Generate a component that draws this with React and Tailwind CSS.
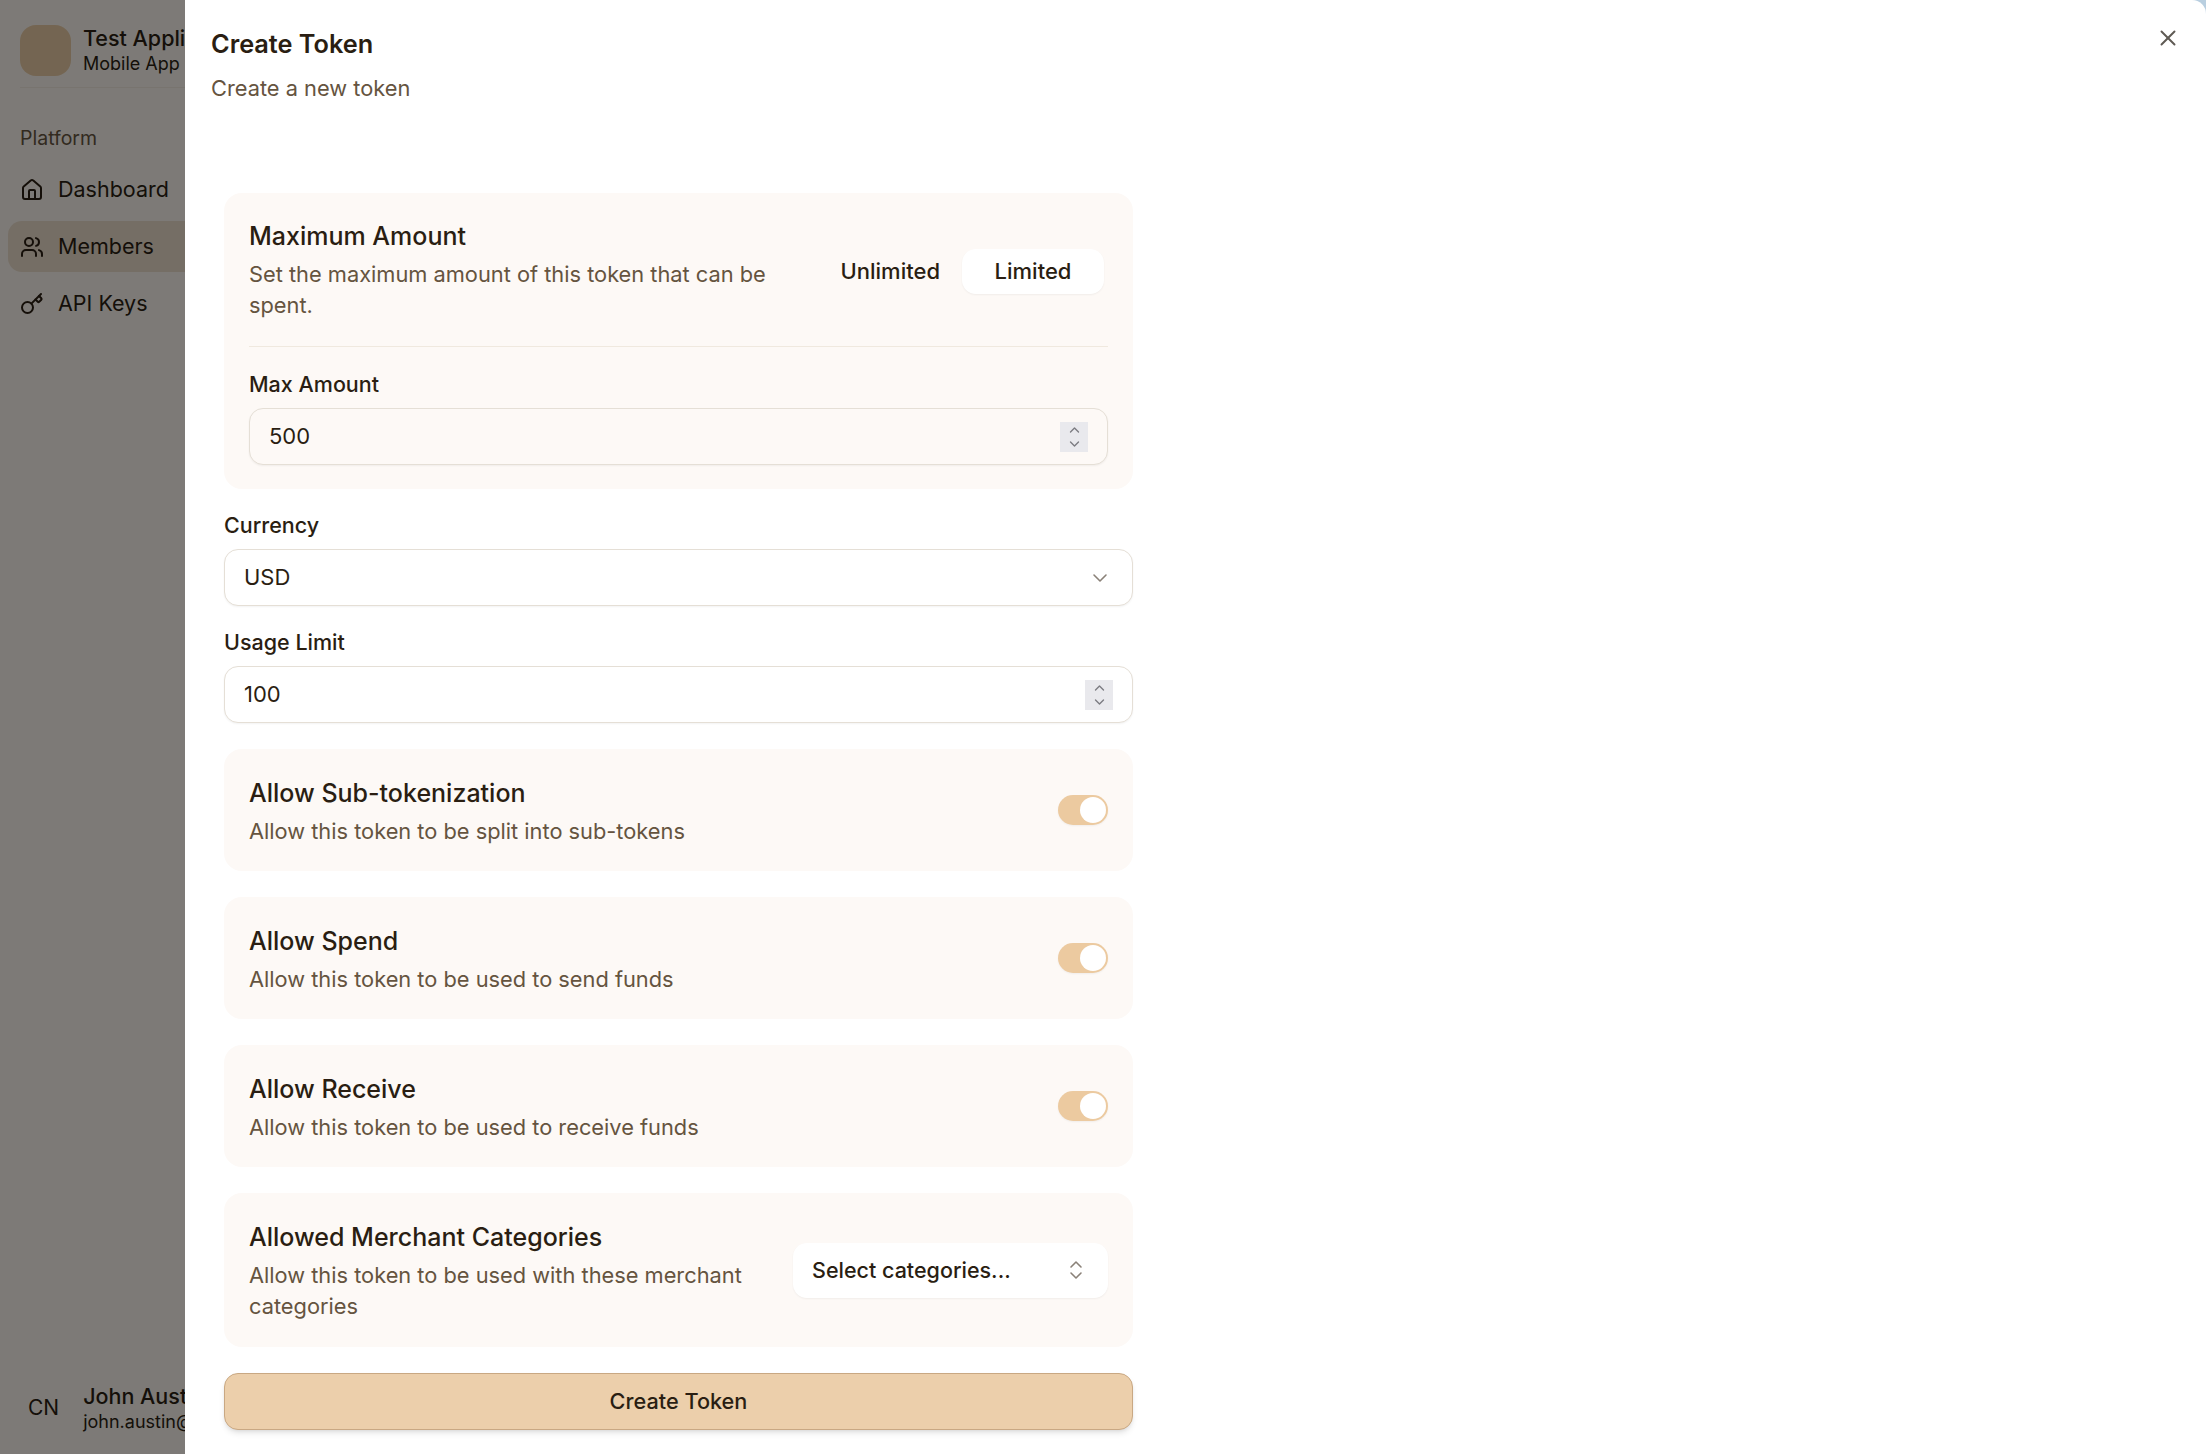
import { ChevronDown, ChevronUp, ChevronsUpDown, House, Key, Users, X } from "lucide-react";

const nav = [
  { label: "Dashboard", icon: House },
  { label: "Members", icon: Users, active: true },
  { label: "API Keys", icon: Key },
];

const Spinner = () => (
  <div className="flex h-[30px] w-[28px] flex-col items-center justify-center bg-[#e9e9ed] text-[#7b7b80]">
    <ChevronUp size={17} strokeWidth={2} className="-mb-[1px]" />
    <ChevronDown size={17} strokeWidth={2} className="-mt-[1px]" />
  </div>
);

const Toggle = () => (
  <div className="flex h-[30px] w-[50px] shrink-0 items-center justify-end rounded-full bg-[#eccaa0] pr-[2px] shadow-xs">
    <div className="h-[26px] w-[26px] rounded-full bg-white" />
  </div>
);

const Field = ({ label, children }) => (
  <div className="flex flex-col gap-[14px]">
    <div className="text-[21.5px] leading-[20px] font-medium text-[#2a1e12]">{label}</div>
    {children}
  </div>
);

const Box = ({ children, bg = "bg-white" }) => (
  <div className={`flex h-[57px] items-center justify-between rounded-[14px] border border-[#e5dfd6] ${bg} pr-[19px] pl-[19px] text-[22px] text-[#2a1e12] shadow-xs`}>
    {children}
  </div>
);

const Heading = ({ title, text, className = "" }) => (
  <div className={`flex min-w-0 flex-col gap-[7px] ${className}`}>
    <div className="text-[25px] leading-[31px] font-medium text-[#2a1e12]">{title}</div>
    <div className="text-[21.8px] leading-[31px] text-[#65543f]">{text}</div>
  </div>
);

const ToggleCard = ({ title, text }) => (
  <div className="flex h-[122px] items-center justify-between rounded-[18px] bg-[#fdf9f6] px-[25px]">
    <Heading title={title} text={text} className="pt-[5px]" />
    <Toggle />
  </div>
);

export default function App() {
  return (
    <div className="relative h-[1454px] w-[2206px] overflow-hidden bg-[#fbf5ee] font-['Inter',sans-serif]">
      <aside className="flex h-full w-[185px] flex-col overflow-hidden text-[#2a1e12]">
        <div className="ml-[20px] flex h-[88px] w-[340px] shrink-0 items-center gap-[12px] border-b border-[#f0e9df] pt-[13px]">
          <div className="h-[51px] w-[51px] shrink-0 rounded-[16px] bg-[#e9cba5]" />
          <div className="flex flex-col whitespace-nowrap">
            <span className="text-[21.5px] leading-[28px] font-medium">Test Application</span>
            <span className="text-[18px] leading-[24px]">Mobile App</span>
          </div>
        </div>
        <div className="mt-[38px] w-[360px] px-[8px]">
          <div className="px-[12px] text-[19.5px] leading-[24px] text-[#65543f]">Platform</div>
          <div className="mt-[14px] flex flex-col gap-[6px]">
            {nav.map(({ label, icon: Icon, active }) => (
              <div key={label} className={`flex h-[51px] items-center gap-[14px] rounded-[14px] px-[12px] text-[21.5px] ${active ? "bg-[#eadccb]" : ""}`}>
                <Icon size={24} strokeWidth={2} />
                {label}
              </div>
            ))}
          </div>
        </div>
        <div className="mt-auto mb-[20px] flex w-[400px] items-center gap-[24px] px-[28px]">
          <span className="text-[21px]">CN</span>
          <div className="flex flex-col whitespace-nowrap">
            <span className="text-[21.5px] leading-[28px] font-medium">John Austin</span>
            <span className="text-[18px] leading-[24px]">john.austin@example.com</span>
          </div>
        </div>
      </aside>

      <div className="absolute inset-0 bg-black/50" />

      <div className="absolute top-0 right-0 h-[14px] w-[14px] bg-[#b9cfe0]" />
      <div className="absolute inset-y-0 right-0 left-[185px] rounded-tr-[14px] bg-white px-[26px] text-[#2a1e12]">
        <X size={26} strokeWidth={1.8} className="absolute top-[25px] right-[25px] text-[#5f5a54]" />
        <h2 className="pt-[28px] text-[25.3px] leading-[32px] font-semibold">Create Token</h2>
        <p className="mt-[12px] text-[21.8px] leading-[32px] text-[#65543f]">Create a new token</p>

        <div className="mt-[89px] ml-[13px] flex w-[909px] flex-col gap-[26px]">
          <div className="flex flex-col rounded-[18px] bg-[#fdf9f6] px-[25px] pt-[28px] pb-[24px]">
            <div className="flex items-center justify-between gap-[40px] border-b border-[#f0e9df] pb-[25px]">
              <Heading title="Maximum Amount" text="Set the maximum amount of this token that can be spent." />
              <div className="flex shrink-0 items-center gap-[4px] pr-[4px] text-[22px] font-medium">
                <span className="px-[18px]">Unlimited</span>
                <span className="flex h-[45px] w-[142px] items-center justify-center rounded-[14px] bg-white shadow-xs">Limited</span>
              </div>
            </div>
            <div className="mt-[27px]">
              <Field label="Max Amount">
                <Box bg="bg-[#fdf9f6]">
                  500
                  <Spinner />
                </Box>
              </Field>
            </div>
          </div>

          <Field label="Currency">
            <Box>
              USD
              <ChevronDown size={24} strokeWidth={1.6} className="mr-[1px] text-[#8a8178]" />
            </Box>
          </Field>

          <Field label="Usage Limit">
            <Box>
              100
              <Spinner />
            </Box>
          </Field>

          <ToggleCard title="Allow Sub-tokenization" text="Allow this token to be split into sub-tokens" />
          <ToggleCard title="Allow Spend" text="Allow this token to be used to send funds" />
          <ToggleCard title="Allow Receive" text="Allow this token to be used to receive funds" />

          <div className="flex h-[154px] items-center justify-between gap-[40px] rounded-[18px] bg-[#fdf9f6] px-[25px]">
            <Heading title="Allowed Merchant Categories" text="Allow this token to be used with these merchant categories" className="pt-[3px]" />
            <div className="flex h-[55px] w-[315px] shrink-0 items-center justify-between rounded-[14px] bg-white pr-[20px] pl-[19px] text-[21.5px] font-medium shadow-xs">
              Select categories...
              <ChevronsUpDown size={24} strokeWidth={1.6} className="text-[#8a8178]" />
            </div>
          </div>

          <button className="flex h-[57px] items-center justify-center rounded-[14px] border border-[#c9a883] bg-[#eccfab] text-[21.7px] font-medium shadow-md">
            Create Token
          </button>
        </div>
      </div>
    </div>
  );
}
